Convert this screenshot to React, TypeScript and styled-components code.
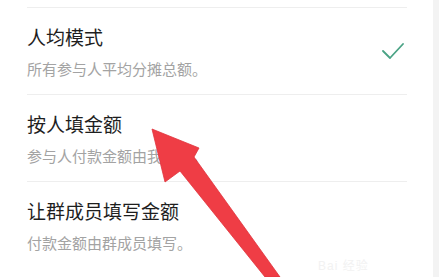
import React from "react";
import styled, { createGlobalStyle } from "styled-components";

const Global = createGlobalStyle`
  html, body { margin: 0; padding: 0; background: #ffffff; }
  body { font-family: "Noto Sans CJK SC", "Noto Sans", sans-serif; overflow: hidden; }
`;

const Page = styled.div`
  position: relative;
  width: 439px;
  height: 277px;
  display: flex;
  overflow: hidden;
  background: #ffffff;
`;

const List = styled.div`
  width: 433px;
  padding: 7px 26px 0 27px;
  box-sizing: border-box;
  display: flex;
  flex-direction: column;
`;

const SideStrip = styled.div`
  width: 6px;
  background: #f3f3f3;
`;

const Item = styled.div`
  display: flex;
  align-items: center;
  justify-content: space-between;
  border-top: 1px solid #eeeeee;
  padding: 19px 0 18px;
  flex-shrink: 0;
`;

const Texts = styled.div`
  display: flex;
  flex-direction: column;
  gap: 15px;
`;

const Title = styled.div`
  font-size: 19px;
  line-height: 19px;
  color: #1e1e1e;
`;

const Sub = styled.div`
  font-size: 15px;
  line-height: 15px;
  color: #a3a3a3;
`;

const Check = styled.svg`
  width: 22px;
  height: 16px;
  margin-right: 3px;
  margin-top: -2px;
`;

const Overlay = styled.svg`
  position: absolute;
  left: 0;
  top: 0;
  width: 439px;
  height: 277px;
  pointer-events: none;
`;

const Watermark = styled.div`
  position: absolute;
  left: 318px;
  top: 259px;
  font-size: 12px;
  line-height: 14px;
  color: #f2f2f2;
  font-family: "Liberation Sans", "Noto Sans CJK SC", sans-serif;
  letter-spacing: 1px;
`;

const items = [
  { title: "人均模式", sub: "所有参与人平均分摊总额。", checked: true },
  { title: "按人填金额", sub: "参与人付款金额由我填写。", checked: false },
  { title: "让群成员填写金额", sub: "付款金额由群成员填写。", checked: false },
];

export default function App() {
  return (
    <Page>
      <Global />
      <List>
        {items.map((it) => (
          <Item key={it.title}>
            <Texts>
              <Title>{it.title}</Title>
              <Sub>{it.sub}</Sub>
            </Texts>
            {it.checked && (
              <Check viewBox="0 0 22 16">
                <polyline
                  points="1,8 8,15 21,1"
                  fill="none"
                  stroke="#4aa385"
                  strokeWidth="1.8"
                  strokeLinecap="round"
                  strokeLinejoin="round"
                />
              </Check>
            )}
          </Item>
        ))}
      </List>
      <SideStrip />
      <Watermark>Bai 经验</Watermark>
      <Overlay viewBox="0 0 439 277">
        <polygon
          points="152,129 199,148 194,157 280,277 265,277 180,171 165,182"
          fill="#ef3d45"
          stroke="#e0333c"
          strokeWidth="0.8"
          strokeLinejoin="round"
        />
      </Overlay>
    </Page>
  );
}
